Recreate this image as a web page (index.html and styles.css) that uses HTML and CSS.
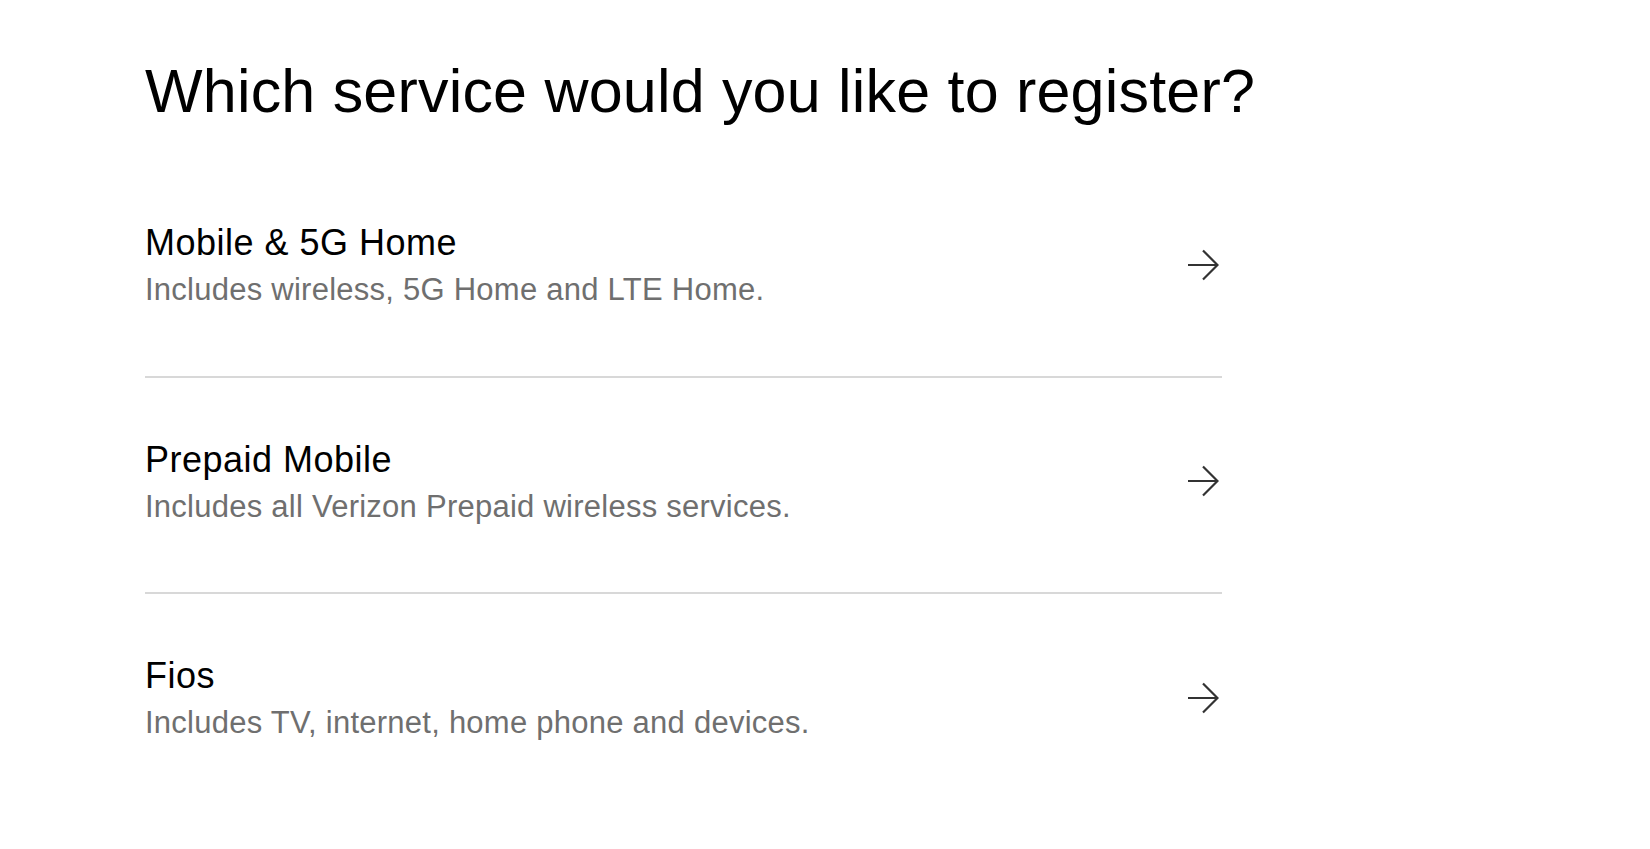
FILE: index.html
```html
<!DOCTYPE html>
<html lang="en">
<head>
  <meta charset="UTF-8" />
  <title>Register a service</title>
  <meta name="viewport" content="width=device-width, initial-scale=1.0"/>
  <link rel="stylesheet" href="styles.css">
</head>
<body>
  <div class="page">
    <h1>Which service would you like to register?</h1>
    <ul class="service-list">
      <li class="service">
        <div class="service-text">
          <div class="service-name">Mobile &amp; 5G Home</div>
          <div class="service-desc">Includes wireless, 5G Home and LTE Home.</div>
        </div>
        <svg class="arrow" width="32" height="32" viewBox="0 0 32 32"><path d="M1 16H30.5M16 1.5L30.5 16L16 30.5"/></svg>
      </li>
      <li class="service">
        <div class="service-text">
          <div class="service-name">Prepaid Mobile</div>
          <div class="service-desc">Includes all Verizon Prepaid wireless services.</div>
        </div>
        <svg class="arrow" width="32" height="32" viewBox="0 0 32 32"><path d="M1 16H30.5M16 1.5L30.5 16L16 30.5"/></svg>
      </li>
      <li class="service">
        <div class="service-text">
          <div class="service-name">Fios</div>
          <div class="service-desc">Includes TV, internet, home phone and devices.</div>
        </div>
        <svg class="arrow" width="32" height="32" viewBox="0 0 32 32"><path d="M1 16H30.5M16 1.5L30.5 16L16 30.5"/></svg>
      </li>
    </ul>
  </div>
</body>
</html>
```

FILE: styles.css
```css
body { margin: 0; background: #fff; color: #000; font-family: "Liberation Sans", Arial, sans-serif; }
.page { width: 1077px; padding: 55px 0 0 145px; }
h1 { font-size: 61px; font-weight: normal; line-height: 1.2; margin: 0 0 33px; white-space: nowrap; letter-spacing: 0.2px; }
.service-list { list-style: none; margin: 0; padding: 0; }
.service {
  display: flex;
  align-items: center;
  justify-content: space-between;
  padding: 60px 3px 67px 0;
  border-bottom: 2px solid #d8d8d8;
  cursor: pointer;
}
.service:last-child { border-bottom: none; }
.service-name { font-size: 36px; line-height: 1.2; letter-spacing: 0.5px; }
.service-desc { font-size: 31px; line-height: 1.2; color: #6f6f6f; margin-top: 7px; letter-spacing: 0.25px; }
.arrow { fill: none; stroke: #333; stroke-width: 2.2; }
```
